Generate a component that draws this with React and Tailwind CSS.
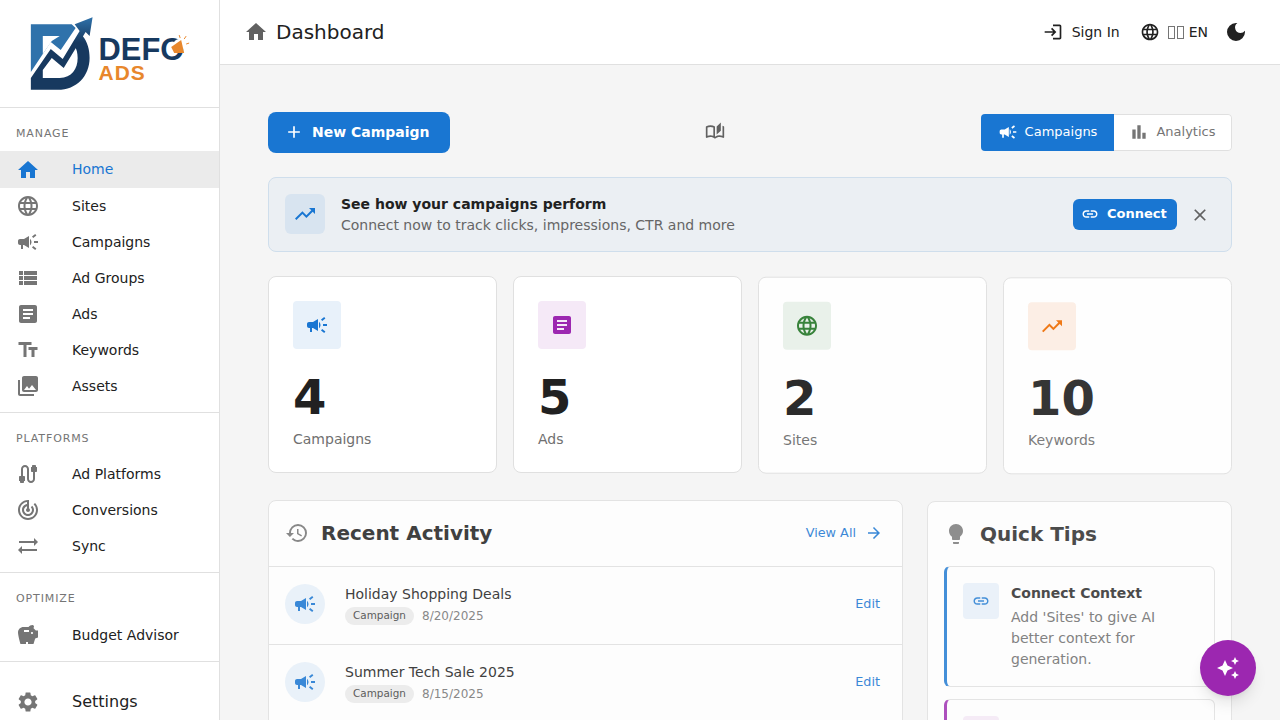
import {
  MdHome, MdLanguage, MdCampaign, MdViewList, MdArticle, MdTextFields, MdPhotoLibrary, MdCable,
  MdTrackChanges, MdSyncAlt, MdSavings, MdSettings, MdLogin, MdDarkMode, MdAdd, MdOutlineAutoStories,
  MdBarChart, MdTrendingUp, MdLink, MdClose, MdHistory, MdArrowForward, MdLightbulb, MdAutoAwesome,
} from 'react-icons/md'

const manage = [
  { label: 'Sites', icon: MdLanguage },
  { label: 'Campaigns', icon: MdCampaign },
  { label: 'Ad Groups', icon: MdViewList },
  { label: 'Ads', icon: MdArticle },
  { label: 'Keywords', icon: MdTextFields },
  { label: 'Assets', icon: MdPhotoLibrary },
]

const platforms = [
  { label: 'Ad Platforms', icon: MdCable },
  { label: 'Conversions', icon: MdTrackChanges },
  { label: 'Sync', icon: MdSyncAlt },
]

const activity = [
  { title: 'Holiday Shopping Deals', date: '8/20/2025' },
  { title: 'Summer Tech Sale 2025', date: '8/15/2025' },
]

function Logo() {
  return (
    <svg viewBox="0 0 220 107" className="h-[107px] w-[219px]">
      <defs>
        <linearGradient id="arrowFade" x1="0" y1="0" x2="0" y2="1">
          <stop offset="0" stopColor="#2f72ab" />
          <stop offset="0.35" stopColor="#17395f" />
        </linearGradient>
      </defs>
      <path d="M31 24H72L76 28L61 50L51 42L31 72Z" fill="#2f72ab" />
      <path d="M43 36H60L52 41L43 54Z" fill="#fff" />
      <path d="M31 78L51 49L63 59L80 31L75 24L93 17L90 36L86 32L64 68L52 58L43 70V78H60C72 78 78 69 78 58C78 53 77 49 75 46L83 36C88 42 90 50 90 58C90 76 77 90 58 90H31Z" fill="url(#arrowFade)" />
      <text x="99" y="60" fontFamily="Liberation Sans" fontWeight="700" fontSize="31" fill="#17395f">DEFO</text>
      <text x="99" y="80" fontFamily="Liberation Sans" fontWeight="700" fontSize="21" fill="#e8872c" letterSpacing="1">ADS</text>
      <circle cx="180" cy="45" r="6" fill="#fff" />
      <path d="M172 47L182 40L185 53L175 53Z" fill="#e8872c" />
      <path d="M185 39L187 36M187 44L190 43M181 38L180 35" stroke="#e8872c" strokeWidth="1" />
    </svg>
  )
}

function NavItem({ label, icon: Icon }) {
  return (
    <div className="flex h-9 items-center pl-4 text-sm text-[#212121]">
      <Icon className="h-6 w-6 shrink-0 text-[#757575]" />
      <span className="ml-8">{label}</span>
    </div>
  )
}

function Sidebar() {
  return (
    <aside className="flex h-screen w-[220px] shrink-0 flex-col overflow-hidden border-r border-[#e0e0e0] bg-white">
      <div className="h-[108px] shrink-0 border-b border-[#e0e0e0]">
        <Logo />
      </div>
      <div className="flex h-[43px] shrink-0 items-center pl-4 pt-[10px] text-[11px] tracking-[0.08em] text-[#757575]">MANAGE</div>
      <div className="flex h-[37px] shrink-0 items-center bg-[#ebebeb] pl-4 text-sm text-[#1976d2]">
        <MdHome className="h-6 w-6 shrink-0" />
        <span className="ml-8 -mt-px">Home</span>
      </div>
      {manage.map((item) => <NavItem key={item.label} {...item} />)}
      <div className="mt-2 border-b border-[#e0e0e0]" />
      <div className="flex h-[43px] shrink-0 items-center pl-4 pt-[10px] text-[11px] tracking-[0.08em] text-[#757575]">PLATFORMS</div>
      {platforms.map((item) => <NavItem key={item.label} {...item} />)}
      <div className="mt-2 border-b border-[#e0e0e0]" />
      <div className="flex h-[44px] shrink-0 items-center pl-4 pt-[8px] text-[11px] tracking-[0.08em] text-[#757575]">OPTIMIZE</div>
      <NavItem label="Budget Advisor" icon={MdSavings} />
      <div className="mt-2 border-b border-[#e0e0e0]" />
      <div className="mt-[22px] flex h-9 items-center pl-4 text-base text-[#212121]">
        <MdSettings className="h-6 w-6 shrink-0 text-[#757575]" />
        <span className="ml-8">Settings</span>
      </div>
    </aside>
  )
}

function Header() {
  return (
    <header className="flex h-[65px] shrink-0 items-center justify-between border-b border-[#e0e0e0] bg-white pl-6 pr-[32px]">
      <div className="flex items-center">
        <MdHome className="h-6 w-6 text-[#616161]" />
        <span className="ml-2 text-xl text-[#212121]">Dashboard</span>
      </div>
      <div className="flex items-center text-sm text-[#212121]">
        <MdLogin className="h-5 w-5" />
        <span className="ml-[9px]">Sign In</span>
        <MdLanguage className="ml-5 h-5 w-5" />
        {/* the flag shows as two empty boxes in the screenshot */}
        <span className="ml-2 flex gap-[2px]" aria-hidden="true">
          <span className="h-[13px] w-[7px] border border-[#757575]" />
          <span className="h-[13px] w-[7px] border border-[#757575]" />
        </span>
        <span className="ml-[5px]">EN</span>
        <MdDarkMode className="ml-4 h-6 w-6" />
      </div>
    </header>
  )
}

function Toolbar() {
  return (
    <div className="flex items-center justify-between">
      <button className="flex h-[41px] w-[182px] items-center gap-2 rounded-lg bg-[#1976d2] pb-px pl-[16px] text-sm font-bold text-white">
        <MdAdd className="h-5 w-5" />
        New Campaign
      </button>
      <MdOutlineAutoStories className="mb-px mr-[2px] h-5 w-5 text-[#616161]" />
      <div className="flex h-[37px] w-[251px] overflow-hidden rounded text-[13px]">
        <div className="flex w-[133px] items-center justify-center gap-[7px] bg-[#1976d2] pb-px text-white">
          <MdCampaign className="h-5 w-5" />
          Campaigns
        </div>
        <div className="flex flex-1 items-center justify-center gap-[7px] rounded-r border border-l-0 border-[#e0e0e0] bg-white pb-px text-[#757575]">
          <MdBarChart className="h-5 w-5" />
          Analytics
        </div>
      </div>
    </div>
  )
}

function Banner() {
  return (
    <div className="mt-6 flex h-[75px] items-center rounded-lg border border-[#cfdeec] bg-[#ebeff3] pl-4 pr-[21px]">
      <div className="mb-px flex h-10 w-10 items-center justify-center rounded-md bg-[#d8e4f0]">
        <MdTrendingUp className="h-6 w-6 text-[#1976d2]" />
      </div>
      <div className="ml-4 flex-1">
        <div className="text-sm leading-[21px] font-bold text-[#212121]">See how your campaigns perform</div>
        <div className="text-sm leading-[21px] text-[#666666]">Connect now to track clicks, impressions, CTR and more</div>
      </div>
      <button className="flex h-[31px] w-[104px] items-center gap-2 rounded-md bg-[#1976d2] pb-px pl-[8px] text-[13px] font-bold text-white">
        <MdLink className="h-[18px] w-[18px]" />
        Connect
      </button>
      <MdClose className="ml-[13px] h-5 w-5 text-[#616161]" />
    </div>
  )
}

function StatCard({ icon: Icon, box, tint, value, label, className }) {
  return (
    <div className={`h-[197px] rounded-lg border border-[#e0e0e0] bg-white p-6 ${className}`}>
      <div className={`flex h-12 w-12 items-center justify-center rounded ${box}`}>
        <Icon className={`h-6 w-6 ${tint}`} />
      </div>
      <div className="mt-[19px] text-5xl leading-[58px] font-bold text-[#212121]">{value}</div>
      <div className="mt-[3px] text-sm text-[#707070]">{label}</div>
    </div>
  )
}

function RecentActivity() {
  return (
    <div className="h-[260px] overflow-hidden rounded-lg border border-[#e0e0e0] bg-white opacity-85">
      <div className="flex h-[66px] items-center justify-between border-b border-[#e0e0e0] pb-px pl-4 pr-[19px]">
        <div className="flex items-center">
          <MdHistory className="h-6 w-6 text-[#757575]" />
          <span className="ml-[12px] text-xl font-bold text-[#212121]">Recent Activity</span>
        </div>
        <div className="flex items-center text-[12.8px] text-[#1976d2]">
          View All
          <MdArrowForward className="ml-[9px] h-[18px] w-[18px]" />
        </div>
      </div>
      {activity.map((row) => (
        <div key={row.title} className="flex h-[78px] items-start border-b border-[#e0e0e0] pl-4 pr-[22px] pt-[17px]">
          <div className="flex h-10 w-10 items-center justify-center rounded-full bg-[#e8f1fa]">
            <MdCampaign className="h-6 w-6 text-[#1976d2]" />
          </div>
          <div className="ml-5 flex-1">
            <div className="text-sm leading-[20px] text-[#212121]">{row.title}</div>
            <div className="mt-[3px] flex items-center">
              <span className="flex h-[18px] w-[69px] items-center justify-center rounded-full bg-[#ebebeb] text-[10.4px] text-[#424242]">Campaign</span>
              <span className="ml-2 -mt-px text-xs text-[#757575]">{row.date}</span>
            </div>
          </div>
          <span className="mt-[10px] text-[12.8px] text-[#1976d2]">Edit</span>
        </div>
      ))}
    </div>
  )
}

function QuickTips() {
  return (
    <div className="mt-px h-[260px] overflow-hidden rounded-lg border border-[#e0e0e0] bg-white px-4 opacity-80">
      <div className="flex h-[64px] items-center">
        <MdLightbulb className="h-6 w-6 text-[#757575]" />
        <span className="ml-[12px] text-xl font-bold text-[#212121]">Quick Tips</span>
      </div>
      <div className="flex h-[121px] rounded-md border border-l-[3px] border-[#e0e0e0] border-l-[#1976d2] pl-4 pr-3 pt-4">
        <div className="flex h-9 w-9 shrink-0 items-center justify-center rounded bg-[#e8f1fa]">
          <MdLink className="h-[18px] w-[18px] text-[#1976d2]" />
        </div>
        <div className="ml-3">
          <div className="text-sm leading-[20px] font-bold text-[#212121]">Connect Context</div>
          <div className="mt-[4px] text-sm leading-[21px] text-[#666666]">Add 'Sites' to give AI better context for generation.</div>
        </div>
      </div>
      <div className="mt-3 flex h-[121px] rounded-md border border-l-[3px] border-[#e0e0e0] border-l-[#9c27b0] pl-4 pt-4">
        <div className="h-9 w-9 shrink-0 rounded bg-[#f5e9f7]" />
      </div>
    </div>
  )
}

export default function App() {
  return (
    <div className="flex h-screen overflow-hidden bg-[#f5f5f5] font-['DejaVu_Sans',sans-serif]">
      <Sidebar />
      <div className="flex min-w-0 flex-1 flex-col">
        <Header />
        <main className="flex-1 overflow-hidden px-12 pt-[47px]">
          <Toolbar />
          <Banner />
          <div className="mt-6 grid grid-cols-4 gap-4">
            <StatCard icon={MdCampaign} box="bg-[#e8f1fa]" tint="text-[#1976d2]" value="4" label="Campaigns" />
            <StatCard icon={MdArticle} box="bg-[#f5e9f7]" tint="text-[#9c27b0]" value="5" label="Ads" />
            <StatCard icon={MdLanguage} box="bg-[#e9f1ea]" tint="text-[#2e7d32]" value="2" label="Sites" className="translate-y-[0.7px] opacity-95" />
            <StatCard icon={MdTrendingUp} box="bg-[#fdeee4]" tint="text-[#ef6c00]" value="10" label="Keywords" className="translate-y-[1.3px] opacity-90" />
          </div>
          <div className="mt-[27px] grid grid-cols-[635px_305px] gap-6">
            <RecentActivity />
            <QuickTips />
          </div>
        </main>
      </div>
      <button className="absolute bottom-6 right-6 flex h-14 w-14 items-center justify-center rounded-full bg-[#9c27b0] text-white shadow-lg">
        <MdAutoAwesome className="h-6 w-6" />
      </button>
    </div>
  )
}
